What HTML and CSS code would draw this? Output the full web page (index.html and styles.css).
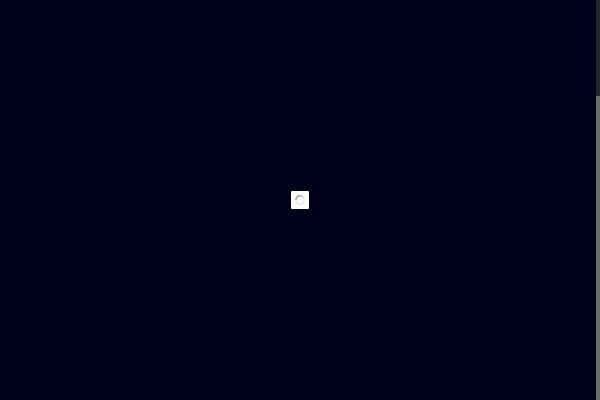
FILE: index.html
```html
<!DOCTYPE html>
<html lang="en">
<head>
    <meta charset="UTF-8">
    <title>Loading</title>
    <link rel="stylesheet" href="styles.css">
</head>
<body>
    <div class="page">
        <div class="loader">
            <svg class="spinner" width="12" height="12" viewBox="0 0 12 12" fill="none" stroke-width="1.4">
                <circle cx="6" cy="6" r="4.2" stroke="#e4e4e4"/>
                <path d="M1.8 6A4.2 4.2 0 0 1 6 1.8" stroke="#a0a0a0"/>
                <path d="M6 1.8A4.2 4.2 0 0 1 9 3" stroke="#c4c4c4"/>
            </svg>
        </div>
    </div>
    <div class="scrollbar">
        <div class="thumb"></div>
    </div>
</body>
</html>
```

FILE: styles.css
```css
html, body {
    height: 100%;
}
body {
    margin: 0;
    display: flex;
    overflow: hidden;
    background-color: #000018;
}
.page {
    flex: 1;
    display: flex;
    align-items: center;
    justify-content: center;
    padding-left: 4px;
}
.loader {
    width: 18px;
    height: 18px;
    background-color: #fff;
    border-radius: 1px;
    display: flex;
    align-items: center;
    justify-content: center;
}
.scrollbar {
    width: 4px;
    background-color: #6b6b66;
}
.thumb {
    height: 96px;
    background-color: #262623;
}
```
